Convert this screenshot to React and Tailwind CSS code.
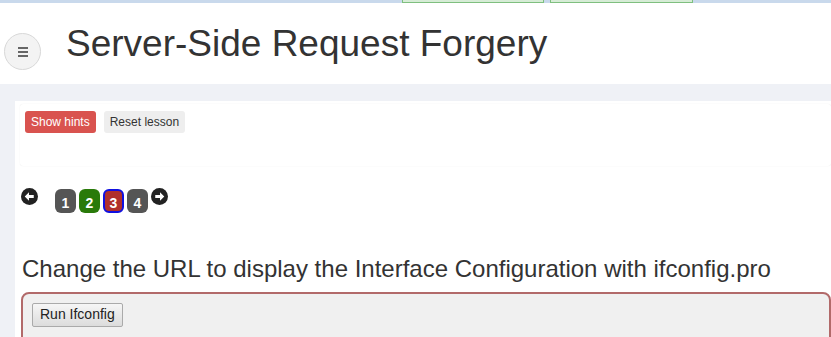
import React from 'react'

const pages = [
  { n: 1, cls: 'bg-[#555] border-transparent' },
  { n: 2, cls: 'bg-[#2a7a0a] border-transparent' },
  { n: 3, cls: 'bg-[#b0302c] border-[#1010e0]' },
  { n: 4, cls: 'bg-[#555] border-transparent' },
]

const ArrowCircle = ({ dir }) => (
  <svg width="17" height="17" viewBox="0 0 16 16">
    <circle cx="8" cy="8" r="8" fill="#222" />
    {dir === 'left' ? (
      <path d="M3.5 8 L7.5 4 L7.5 6.5 L12 6.5 L12 9.5 L7.5 9.5 L7.5 12 Z" fill="#fff" />
    ) : (
      <path d="M12.5 8 L8.5 4 L8.5 6.5 L4 6.5 L4 9.5 L8.5 9.5 L8.5 12 Z" fill="#fff" />
    )}
  </svg>
)

const App = () => {
  return (
    <div className="w-[831px] h-[337px] overflow-hidden bg-[#eff1f6] font-['Liberation_Sans',Arial,sans-serif] text-[#333]">

      {/* top tab strip */}
      <div className="h-[3px] bg-[#c9d9ec] flex">
        <div className="w-[402px]" />
        <div className="w-[142px] h-[3px] bg-[#d6ecd6] border border-t-0 border-[#7fbf7f]" />
        <div className="w-[6px]" />
        <div className="w-[143px] h-[3px] bg-[#d6ecd6] border border-t-0 border-[#7fbf7f]" />
      </div>

      {/* header */}
      <div className="h-[81px] bg-white flex items-start">
        <button className="ml-[4px] mt-[30px] w-[37px] h-[37px] rounded-full bg-[#f3f3f3] border border-[#d8d8d8] flex flex-col items-center justify-center gap-[2px]">
          <span className="block w-[10px] h-[2px] bg-[#666]" />
          <span className="block w-[10px] h-[2px] bg-[#666]" />
          <span className="block w-[10px] h-[2px] bg-[#666]" />
        </button>
        <h1 className="ml-[25px] mt-[22px] text-[37px] leading-none text-[#333]">Server-Side Request Forgery</h1>
      </div>

      {/* lesson card */}
      <div className="ml-[15px] mt-[17px] bg-white h-[240px] pt-[3px]">
        <div className="ml-[5px] h-[62px] rounded-[3px] shadow-[0_0_1px_rgba(0,0,0,0.12)] pt-[7px] pl-[5px] flex items-start gap-[8px]">
          <button className="h-[22px] px-[6px] rounded-[3px] bg-[#d9534f] text-white text-[12px]">Show hints</button>
          <button className="h-[22px] px-[6px] rounded-[3px] bg-[#eeeeee] text-[#333] text-[12px]">Reset lesson</button>
        </div>

        <div className="mt-[21px] ml-[6px] flex items-center h-[27px]">
          <div className="-mt-[8px]">
            <ArrowCircle dir="left" />
          </div>
          <div className="ml-[17px] flex items-center gap-[3px]">
            {pages.map((p) => (
              <span
                key={p.n}
                className={`w-[21px] h-[24px] rounded-[6px] border-2 text-white font-bold text-[14px] leading-none flex items-end justify-center pb-[1px] ${p.cls}`}
              >
                {p.n}
              </span>
            ))}
          </div>
          <div className="ml-[3px] -mt-[8px]">
            <ArrowCircle dir="right" />
          </div>
        </div>

        <p className="mt-[43px] ml-[7px] text-[24px] leading-none text-[#333]">
          Change the URL to display the Interface Configuration with ifconfig.pro
        </p>

        <div className="mt-[11px] ml-[6px] h-[60px] rounded-[8px] border-2 border-[#b26a6a] bg-[#f0f0f0] pt-[8px] pl-[9px]">
          <button className="h-[24px] px-[7px] rounded-[2px] border border-[#aaa] bg-gradient-to-b from-[#f6f6f6] to-[#dcdcdc] text-[14px] text-[#222]">
            Run Ifconfig
          </button>
        </div>
      </div>
    </div>
  )
}

export default App
